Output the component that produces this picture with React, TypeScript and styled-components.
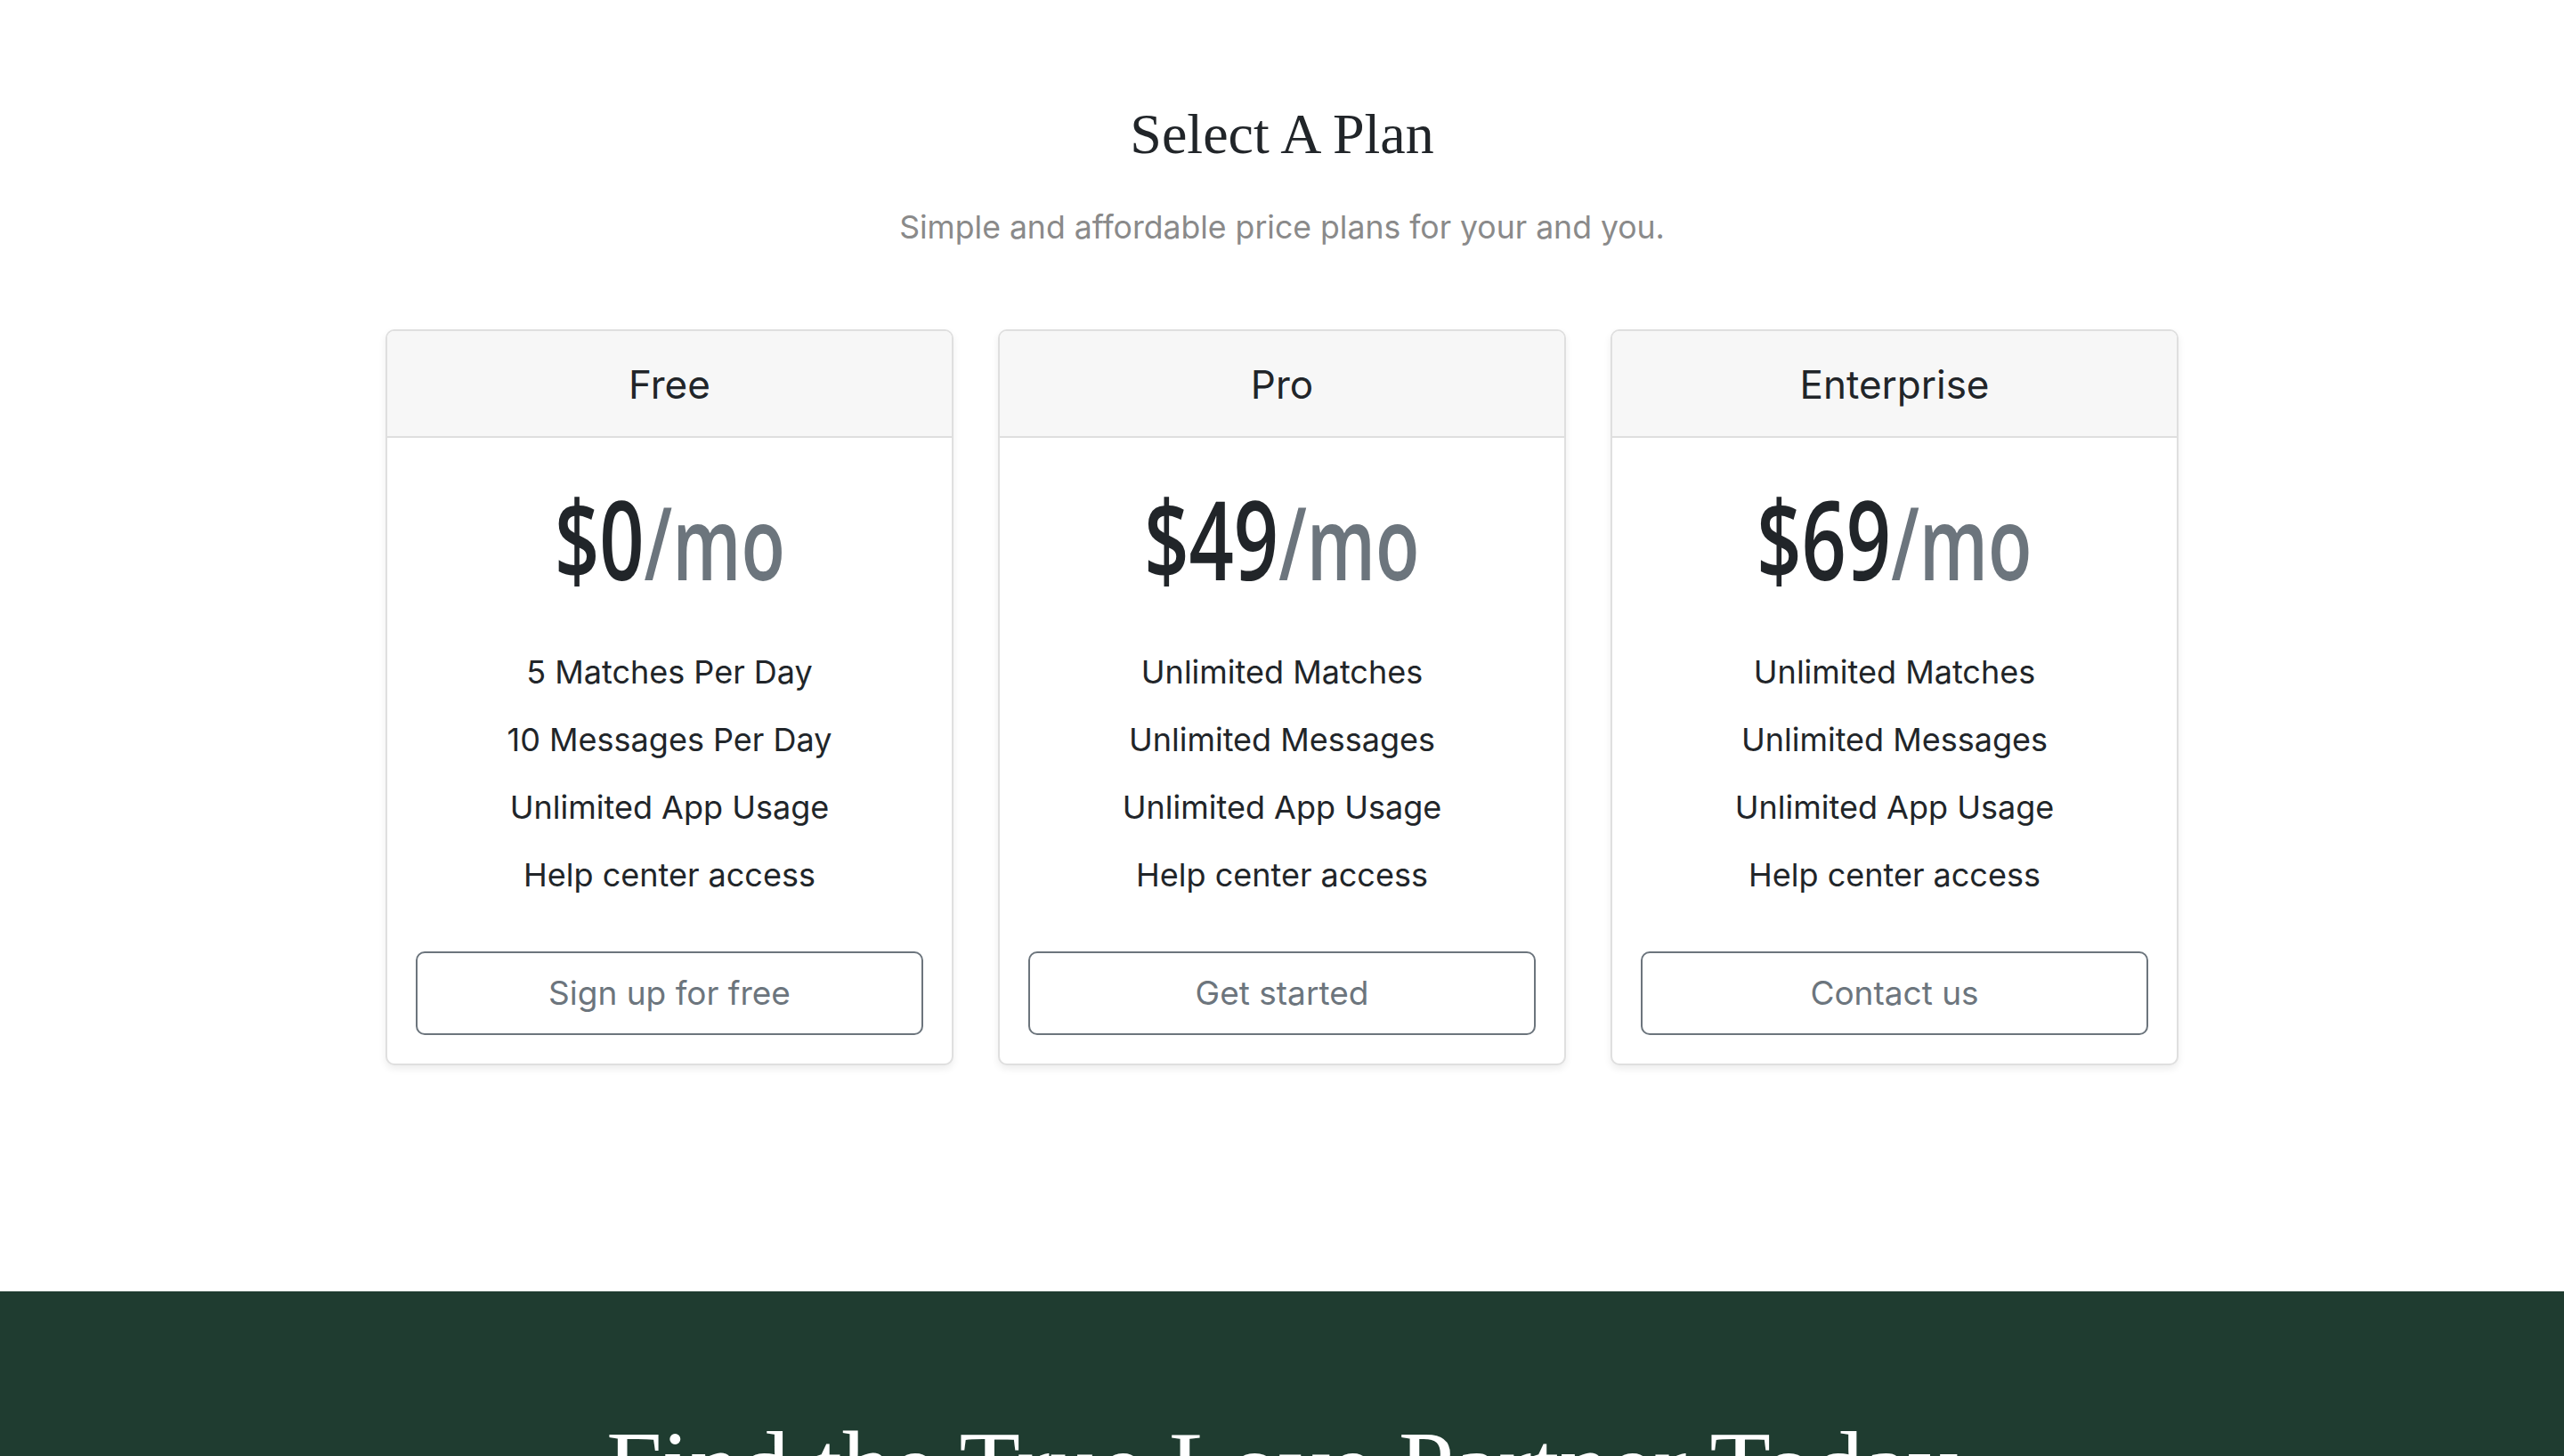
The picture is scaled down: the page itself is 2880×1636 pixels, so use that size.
import styled, { createGlobalStyle } from 'styled-components';

const plans = [
  {
    name: 'Free',
    price: '$0',
    features: ['5 Matches Per Day', '10 Messages Per Day', 'Unlimited App Usage', 'Help center access'],
    action: 'Sign up for free',
  },
  {
    name: 'Pro',
    price: '$49',
    features: ['Unlimited Matches', 'Unlimited Messages', 'Unlimited App Usage', 'Help center access'],
    action: 'Get started',
  },
  {
    name: 'Enterprise',
    price: '$69',
    features: ['Unlimited Matches', 'Unlimited Messages', 'Unlimited App Usage', 'Help center access'],
    action: 'Contact us',
  },
];

function App() {
  return (
    <>
      <GlobalStyle />
      <PricingSection>
        <Title>Select A Plan</Title>
        <Subtitle>Simple and affordable price plans for your and you.</Subtitle>
        <CardGrid>
          {plans.map(({ name, price, features, action }) => (
            <Card key={name}>
              <CardHeader>
                <PlanName>{name}</PlanName>
              </CardHeader>
              <CardBody>
                <PriceRow>
                  <Price>
                    {price}
                    <Per>/mo</Per>
                  </Price>
                </PriceRow>
                <Features>
                  {features.map((item) => (
                    <Feature key={item}>{item}</Feature>
                  ))}
                </Features>
                <ActionButton type="button">{action}</ActionButton>
              </CardBody>
            </Card>
          ))}
        </CardGrid>
      </PricingSection>
      <Banner>
        <BannerTitle>Find the True Love Partner Today</BannerTitle>
      </Banner>
    </>
  );
}

export default App;

const GlobalStyle = createGlobalStyle`
  body {
    margin: 0;
    background: #fff;
    font-family: Inter, "Helvetica Neue", Arial, sans-serif;
    color: #212529;
  }
`;

const PricingSection = styled.section`
  display: flex;
  flex-direction: column;
  align-items: center;

  padding: 113px 0 254px;
`;

const Title = styled.h2`
  margin: 0;

  font-family: "Liberation Serif", "Times New Roman", serif;
  font-size: 64px;
  font-weight: 400;
  line-height: 1.2;
  color: #212529;
`;

const Subtitle = styled.p`
  margin: 39px 0 0;

  font-size: 35.6px;
  line-height: 1.5;
  color: #8a8a8a;
`;

const CardGrid = styled.div`
  display: grid;
  grid-template-columns: repeat(3, 638px);
  column-gap: 50px;

  margin-top: 88px;
`;

const Card = styled.div`
  display: flex;
  flex-direction: column;

  border: 2px solid #dfdfdf;
  border-radius: 10px;
  overflow: hidden;

  background: #fff;
  box-shadow: 0 4px 8px rgba(0, 0, 0, 0.075);
`;

const CardHeader = styled.div`
  padding: 32px 40px 30px;
  border-bottom: 2px solid #dfdfdf;

  background: #f7f7f7;
  text-align: center;
`;

const PlanName = styled.h4`
  margin: 0;

  font-size: 44px;
  font-weight: 400;
  line-height: 56px;
  color: #212529;
`;

const CardBody = styled.div`
  display: flex;
  flex-direction: column;
  align-items: stretch;

  padding: 38px 32px 32px;
  text-align: center;
`;

const PriceRow = styled.div`
  display: flex;
  justify-content: center;
`;

const Price = styled.h1`
  display: inline-block;
  margin: 0;

  font-family: "Open Sans", "DejaVu Sans", sans-serif;
  font-size: 124px;
  font-weight: 560;
  line-height: 1.2;
  color: #212529;

  transform: scaleX(0.71);
  transform-origin: center;
`;

const Per = styled.small`
  font-size: 0.92em;
  font-weight: 560;
  color: #6c757d;
`;

const Features = styled.ul`
  margin: 38px 0 48px;
  padding: 0;

  list-style: none;
`;

const Feature = styled.li`
  font-size: 36px;
  line-height: 76px;
  color: #212529;
`;

const ActionButton = styled.button`
  display: flex;
  align-items: center;
  justify-content: center;

  height: 94px;
  border: 2px solid #6c757d;
  border-radius: 10px;

  background: transparent;
  color: #6c757d;
  font-family: Inter, "Helvetica Neue", Arial, sans-serif;
  font-size: 37px;
  cursor: pointer;
`;

const Banner = styled.section`
  display: flex;
  justify-content: center;

  padding: 130px 0 200px;
  background: #1f3c30;
`;

const BannerTitle = styled.h2`
  margin: 0;

  font-family: "Liberation Serif", "Times New Roman", serif;
  font-size: 112px;
  font-weight: 400;
  line-height: 1.2;
  color: #fff;
`;
